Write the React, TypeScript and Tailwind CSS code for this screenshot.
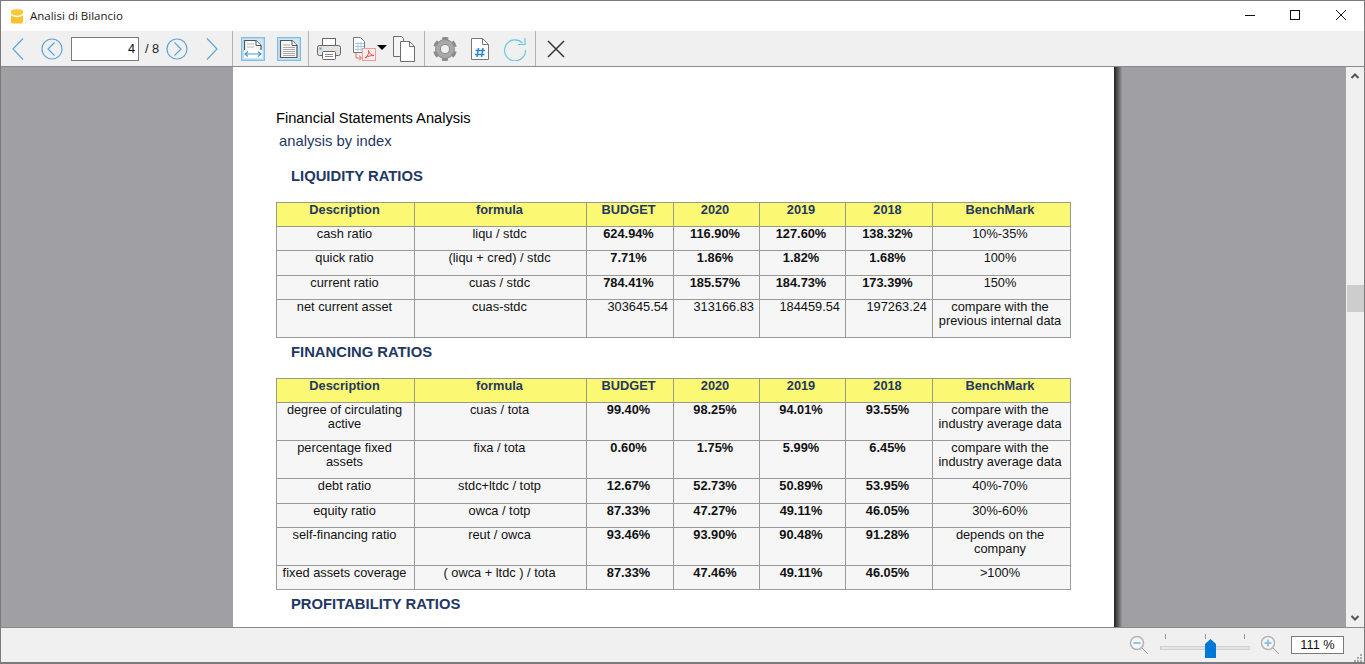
const widths = [138, 172, 87, 86, 86, 87, 138];
const headers = ["Description", "formula", "BUDGET", "2020", "2019", "2018", "BenchMark"];

type Row = { h: string; c: string[]; plain?: boolean };

const liquidity: Row[] = [
  { h: "h-[24px]", c: ["cash ratio", "liqu / stdc", "624.94%", "116.90%", "127.60%", "138.32%", "10%-35%"] },
  { h: "h-[25px]", c: ["quick ratio", "(liqu + cred) / stdc", "7.71%", "1.86%", "1.82%", "1.68%", "100%"] },
  { h: "h-[24px]", c: ["current ratio", "cuas / stdc", "784.41%", "185.57%", "184.73%", "173.39%", "150%"] },
  { h: "h-[38px]", plain: true, c: ["net current asset", "cuas-stdc", "303645.54", "313166.83", "184459.54", "197263.24", "compare with the previous internal data"] },
];

const financing: Row[] = [
  { h: "h-[38px]", c: ["degree of circulating active", "cuas / tota", "99.40%", "98.25%", "94.01%", "93.55%", "compare with the industry average data"] },
  { h: "h-[38px]", c: ["percentage fixed assets", "fixa / tota", "0.60%", "1.75%", "5.99%", "6.45%", "compare with the industry average data"] },
  { h: "h-[25px]", c: ["debt ratio", "stdc+ltdc / totp", "12.67%", "52.73%", "50.89%", "53.95%", "40%-70%"] },
  { h: "h-[24px]", c: ["equity ratio", "owca / totp", "87.33%", "47.27%", "49.11%", "46.05%", "30%-60%"] },
  { h: "h-[38px]", c: ["self-financing ratio", "reut / owca", "93.46%", "93.90%", "90.48%", "91.28%", "depends on the company"] },
  { h: "h-[24px]", c: ["fixed assets coverage", "( owca + ltdc ) / tota", "87.33%", "47.46%", "49.11%", "46.05%", ">100%"] },
];

function cellClass(i: number, plain?: boolean) {
  if (i >= 2 && i <= 5) {
    return plain ? "pl-[1px] pr-[5px] text-right" : "pl-[1px] pr-[4px] text-center font-bold";
  }
  if (i === 6) return "pl-[1px] pr-[4px] text-center";
  return "pl-[1px] pr-[3px] text-center";
}

function RatioTable({ rows }: { rows: Row[] }) {
  return (
    <table className="ml-[43px] w-[794px] table-fixed border-collapse text-[12.8px] leading-[14px] text-[#111]">
      <colgroup>
        {widths.map((w, i) => (
          <col key={i} style={{ width: w }} />
        ))}
      </colgroup>
      <thead>
        <tr className="h-[24px] bg-[#fbf873]">
          {headers.map((t, i) => (
            <th key={t} className={`border border-[#9a9a8a] p-0 align-top font-bold text-[#1f3864] ${i >= 2 ? "pl-[1px] pr-[4px] text-center" : "pl-[1px] pr-[3px] text-center"}`}>
              {t}
            </th>
          ))}
        </tr>
      </thead>
      <tbody>
        {rows.map((r) => (
          <tr key={r.c[0]} className={`${r.h} bg-[#f6f6f6]`}>
            {r.c.map((t, i) => (
              <td key={i} className={`border border-[#9a9a9a] py-0 align-top ${cellClass(i, r.plain)}`}>
                {t}
              </td>
            ))}
          </tr>
        ))}
      </tbody>
    </table>
  );
}

function Sep({ className }: { className: string }) {
  return <div className={`h-[35px] w-px shrink-0 bg-[#b4b4b4] ${className}`} />;
}

function Chevron({ dir }: { dir: "l" | "r" }) {
  return (
    <svg width="14" height="24" viewBox="0 0 14 24" fill="none" stroke="#5fa6d8" strokeWidth="1.2">
      <path d={dir === "l" ? "M12 1.500 2 12l10 10.500" : "M2 1.500 12 12 2 22.500"} />
    </svg>
  );
}

function CircleChevron({ dir }: { dir: "l" | "r" }) {
  return (
    <svg width="22" height="22" viewBox="0 0 22 22" fill="none" stroke="#5fa6d8" strokeWidth="1.2">
      <circle cx="11" cy="11" r="10" />
      <path d={dir === "l" ? "M13.500 4.500 7 11l6.500 6.500" : "M8.500 4.500 15 11l-6.500 6.500"} />
    </svg>
  );
}

function PageIcon({ wide }: { wide?: boolean }) {
  return (
    <svg width="24" height="24" viewBox="0 0 24 24" fill="none">
      <rect x="0.500" y="0.500" width="23" height="23" fill="#cfe6f6" stroke="#7fbde6" />
      <rect x="1.500" y="1.500" width="21" height="21" stroke="#b5d9f1" />
      <path d="M3.500 3.500h11.500l5 5v12h-16.500z" fill="#f8f8f8" stroke="#555" strokeWidth="1.200" />
      <path d="M15 3.500v5h5" fill="#fff" stroke="#555" />
      {wide ? (
        <>
          <path d="M6 7h7M6 10h7" stroke="#bbb" />
          <rect x="3" y="13" width="18" height="8" fill="#fff" />
          <path d="M4 17h16M7 14.500 4 17l3 2.500M17 14.500l3 2.500-3 2.500" stroke="#4a9ad4" strokeWidth="1.200" />
        </>
      ) : (
        <path d="M6 8h7M6 10.500h12M6 12.500h12M6 14.500h12M6 16.500h12M6 18.500h12" stroke="#a8a8a8" />
      )}
    </svg>
  );
}

function Printer() {
  return (
    <svg width="24" height="24" viewBox="0 0 24 24" fill="none" stroke="#666">
      <rect x="5.500" y="1.500" width="13" height="7" fill="#fff" />
      <rect x="0.500" y="8.500" width="23" height="10" rx="2" fill="#e2e2e2" />
      <rect x="5.500" y="14.500" width="13" height="8" rx="1" fill="#fff" />
      <path d="M8 17.500h8M8 19.500h8" stroke="#888" />
      <rect x="2.500" y="10.500" width="2" height="2" fill="#4a9ad4" stroke="none" />
    </svg>
  );
}

function PdfExport() {
  return (
    <svg width="26" height="24" viewBox="0 0 26 24" fill="none">
      <path d="M1.500 0.500h7l4 4v11h-11z" fill="#fff" stroke="#777" />
      <path d="M3 6.500h9M3 9.500h9M3 12.500h9M6 5v9M9 5v9" stroke="#a8c8e4" />
      <path d="M4 16v5h5M7 18.500l2.500 2.500L7 23.500" stroke="#ee6a6a" />
      <rect x="10.500" y="11.500" width="13" height="12" fill="#fdeeee" stroke="#f49a9a" />
      <path d="M13 21c3-2 4-5 3.500-7.500C17 16 19 18.500 22 18.500c-3 0-6 .5-9 2.500z" stroke="#e94b4b" />
    </svg>
  );
}

function Copies() {
  return (
    <svg width="24" height="26" viewBox="0 0 24 26" fill="none" stroke="#6e6e6e">
      <path d="M1.500 0.500h8l2 2v18h-10z" fill="#f6f6f6" />
      <path d="M8.500 5.500h9l5 5v15h-14z" fill="#fff" />
      <path d="M17.500 5.500v5h5" />
    </svg>
  );
}

function Gear() {
  return (
    <svg width="24" height="24" viewBox="0 0 24 24" fill="none">
      <circle cx="12" cy="12" r="9.500" stroke="#8c8c8c" strokeWidth="5" strokeDasharray="5.500 4.450" transform="rotate(13 12 12)" />
      <circle cx="12" cy="12" r="7" stroke="#8c8c8c" strokeWidth="6" />
      <circle cx="12" cy="12" r="7" stroke="#a9a9a9" strokeWidth="4" />
    </svg>
  );
}

function HashDoc() {
  return (
    <svg width="20" height="24" viewBox="0 0 20 24" fill="none">
      <path d="M1.500 1.500h11l6 6v15h-17z" fill="#fff" stroke="#777" />
      <path d="M12.500 1.500v6h6" stroke="#777" />
      <path d="M8.500 11l-1.500 9M13 11l-1.500 9M5.500 13.500h9.500M5 17.500h9.500" stroke="#2b85d0" strokeWidth="1.500" />
    </svg>
  );
}

function Refresh() {
  return (
    <svg width="24" height="24" viewBox="0 0 24 24" fill="none" stroke="#63cbe0" strokeWidth="1.200">
      <path d="M19.500 6A10.500 10.500 0 1 0 22.500 13" />
      <path d="M22 1v6.500h-7" />
    </svg>
  );
}

function Cross() {
  return (
    <svg width="18" height="18" viewBox="0 0 18 18" fill="none" stroke="#333" strokeWidth="1.500">
      <path d="M1 1l16 16M17 1 1 17" />
    </svg>
  );
}

function Magnifier({ plus }: { plus?: boolean }) {
  return (
    <svg width="20" height="20" viewBox="0 0 20 20" fill="none">
      <circle cx="8" cy="8" r="6.500" fill="#f6f6f6" stroke="#b5b5b5" strokeWidth="1.500" />
      <path d="M13 13l6 6" stroke="#9a9a9a" />
      <path d="M4.500 8h7" stroke="#8cc3e6" strokeWidth="2" />
      {plus && <path d="M8 4.500v7" stroke="#8cc3e6" strokeWidth="2" />}
    </svg>
  );
}

export default function App() {
  return (
    <div className="flex h-[664px] w-[1365px] flex-col overflow-hidden border border-b-2 border-[#7b7b7b] bg-white font-['Liberation_Sans',Arial,sans-serif]">
      {/* Title bar */}
      <div className="flex h-[30px] shrink-0 items-center bg-white pl-[9px]">
        <svg width="14" height="16" viewBox="0 0 14 16" className="mr-[6px] mb-[1px]">
          <path d="M1 7c3 3 9 3 12 0v6c0 2-1 2.500-2 2.500H3c-1 0-2-.5-2-2.500z" fill="#fbc02d" />
          <path d="M1 5.500c3 3 9 3 12 0V3C13 .5 1 .5 1 3z" fill="#fdc93a" />
        </svg>
        <span className="font-['Open_Sans',sans-serif] text-[11.500px] text-[#1a1a1a]">Analisi di Bilancio</span>
        <div className="ml-auto flex h-full items-center pb-[2px]">
          <svg width="12" height="12" viewBox="0 0 12 12" className="mr-[33px]">
            <path d="M1 6.500h10" stroke="#111" />
          </svg>
          <svg width="12" height="12" viewBox="0 0 12 12" className="mr-[34px]">
            <rect x="1.500" y="1.500" width="9" height="9" fill="none" stroke="#111" />
          </svg>
          <svg width="12" height="12" viewBox="0 0 12 12" className="mr-[17px]">
            <path d="M1 1l10 10M11 1 1 11" stroke="#111" />
          </svg>
        </div>
      </div>

      {/* Toolbar */}
      <div className="flex h-[36px] shrink-0 items-center border-b border-[#8a8a8a] bg-[#f0f0f0] pl-[10px]">
        <Chevron dir="l" />
        <div className="ml-[16px]">
          <CircleChevron dir="l" />
        </div>
        <div className="ml-[8px] flex h-[24px] w-[68px] items-center justify-end border border-[#7a7a7a] bg-white pr-[3px] text-[12.800px] text-[#111]">
          4
        </div>
        <span className="ml-[6px] w-[15px] text-[12.800px] text-[#222]">/ 8</span>
        <div className="ml-[6px]">
          <CircleChevron dir="r" />
        </div>
        <div className="ml-[17px]">
          <Chevron dir="r" />
        </div>
        <Sep className="ml-[13px]" />
        <div className="ml-[8px]">
          <PageIcon wide />
        </div>
        <div className="ml-[12px]">
          <PageIcon />
        </div>
        <Sep className="ml-[7px]" />
        <div className="ml-[8px]">
          <Printer />
        </div>
        <div className="ml-[11px]">
          <PdfExport />
        </div>
        <span className="ml-[-1px] mb-[3px] h-0 w-0 border-x-[5px] border-t-[5px] border-x-transparent border-t-black" />
        <div className="ml-[5px]">
          <Copies />
        </div>
        <Sep className="ml-[8px]" />
        <div className="ml-[8px]">
          <Gear />
        </div>
        <div className="ml-[13px]">
          <HashDoc />
        </div>
        <div className="ml-[13px]">
          <Refresh />
        </div>
        <Sep className="ml-[8px]" />
        <div className="ml-[11px]">
          <Cross />
        </div>
      </div>

      {/* Document area */}
      <div className="flex min-h-0 flex-1 bg-[#a09fa3]">
        <div className="flex min-w-0 flex-1 justify-start overflow-hidden pl-[232px]">
          <div className="h-[700px] w-[881px] shrink-0 bg-white pt-[42px]">
            <p className="ml-[43px] text-[14.670px] leading-[18px] text-black">Financial Statements Analysis</p>
            <p className="ml-[46px] mt-[5px] text-[14.800px] leading-[18px] text-[#1f3864]">analysis by index</p>
            <h2 className="ml-[58px] mt-[17px] text-[14.800px] font-bold leading-[18px] text-[#1f3864]">LIQUIDITY RATIOS</h2>
            <div className="mt-[17px]">
              <RatioTable rows={liquidity} />
            </div>
            <h2 className="ml-[58px] mt-[5px] text-[14.800px] font-bold leading-[18px] text-[#1f3864]">FINANCING RATIOS</h2>
            <div className="mt-[17px]">
              <RatioTable rows={financing} />
            </div>
            <h2 className="ml-[58px] mt-[5px] text-[14.800px] font-bold leading-[18px] text-[#1f3864]">PROFITABILITY RATIOS</h2>
          </div>
          <div className="h-full w-[8px] shrink-0 bg-gradient-to-r from-[#222] to-[#9a999d]" />
        </div>
        {/* Scrollbar */}
        <div className="flex w-[18px] shrink-0 flex-col items-center bg-[#f0f0f0]">
          <svg width="10" height="18" viewBox="0 0 10 18" fill="none" stroke="#555" strokeWidth="2">
            <path d="M1.500 11 5 7.500 8.500 11" />
          </svg>
          <div className="mt-[200px] h-[27px] w-[17px] bg-[#cdcdcd]" />
          <svg width="10" height="18" viewBox="0 0 10 18" fill="none" stroke="#555" strokeWidth="2" className="mt-auto">
            <path d="M1.500 7 5 10.500 8.500 7" />
          </svg>
        </div>
      </div>

      {/* Status bar */}
      <div className="relative flex h-[35px] shrink-0 items-center border-t border-[#8a8a8a] bg-[#f0f0f0]">
        <div className="ml-auto flex items-center">
          <Magnifier />
          <div className="relative ml-[11px] h-[26px] w-[90px]">
            <div className="absolute left-[5px] top-[2px] h-[5px] w-px bg-[#999]" />
            <div className="absolute left-[45px] top-[2px] h-[5px] w-px bg-[#999]" />
            <div className="absolute left-[84px] top-[2px] h-[5px] w-px bg-[#999]" />
            <div className="absolute left-0 right-0 top-[14px] h-[4px] border border-[#d0d0d0] bg-[#e4e4e4]" />
            <svg width="11" height="19" viewBox="0 0 11 19" className="absolute left-[45px] top-[7px]">
              <path d="M0 5l5.500-5L11 5v14H0z" fill="#0078d7" />
            </svg>
          </div>
          <div className="ml-[10px]">
            <Magnifier plus />
          </div>
          <div className="ml-[11px] mr-[20px] flex h-[18px] w-[53px] items-center justify-center border border-[#7a7a7a] bg-white text-[12.800px] text-[#111]">
            111 %
          </div>
        </div>
        <svg width="10" height="8" viewBox="0 0 10 8" className="absolute bottom-0 right-[1px]" fill="#a8a8a8">
          <rect x="7" y="0" width="2" height="2" />
          <rect x="4" y="3" width="2" height="2" />
          <rect x="7" y="3" width="2" height="2" />
          <rect x="1" y="6" width="2" height="2" />
          <rect x="4" y="6" width="2" height="2" />
          <rect x="7" y="6" width="2" height="2" />
        </svg>
      </div>
    </div>
  );
}
